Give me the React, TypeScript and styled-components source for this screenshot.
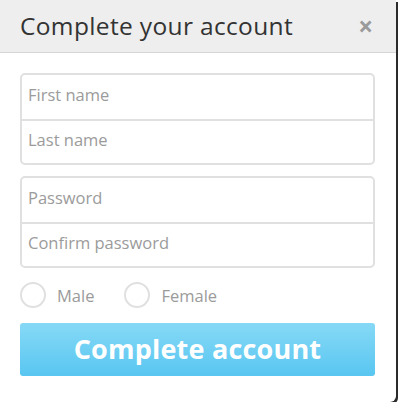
import styled, { createGlobalStyle } from "styled-components";

const GlobalStyle = createGlobalStyle`
  html, body {
    margin: 0;
    padding: 0;
    background: #ffffff;
  }
  * { box-sizing: border-box; }
`;

const Modal = styled.div`
  width: 396px;
  height: 402px;
  background: #ffffff;
  border-bottom-right-radius: 6px;
  box-shadow: 2px 2px 0 #2b2b2b;
  font-family: "Open Sans", "Liberation Sans", sans-serif;
  overflow: hidden;
`;

const Header = styled.div`
  height: 53px;
  background: #eeeeee;
  border-bottom: 1px solid #d6d6d6;
  display: flex;
  align-items: center;
  justify-content: space-between;
  padding: 0 23px 2px 20px;
`;

const Title = styled.h2`
  margin: 0;
  font-size: 24.5px;
  font-weight: 400;
  color: #333333;
  letter-spacing: 0.35px;
`;

const Close = styled.span`
  color: #9a9a9a;
  font-size: 26px;
  font-weight: 700;
  line-height: 1;
  margin-top: 2px;
`;

const Body = styled.form`
  padding: 20px 21px 0 20px;
  display: flex;
  flex-direction: column;
`;

const FieldGroup = styled.div`
  border: 2px solid #e0e0e0;
  border-radius: 5px;
  margin-bottom: 11px;
  display: flex;
  flex-direction: column;
`;

const Input = styled.input`
  height: 44px;
  border: none;
  border-top: ${(p: { $first?: boolean }) => (p.$first ? "none" : "2px solid #e0e0e0")};
  background: transparent;
  padding: 0 6px 5px;
  font-family: inherit;
  font-size: 16.5px;
  outline: none;
  &::placeholder { color: #9b9b9b; }
`;

const Genders = styled.div`
  display: flex;
  align-items: center;
  height: 32px;
`;

const Option = styled.label`
  display: flex;
  align-items: center;
  gap: 11px;
  color: #9b9b9b;
  font-size: 16.5px;
  margin-right: 30px;
`;

const Radio = styled.span`
  width: 26px;
  height: 26px;
  border-radius: 50%;
  border: 2px solid #e0e0e0;
  background: #ffffff;
`;

const Submit = styled.button`
  margin-top: 12px;
  height: 53px;
  border: none;
  border-radius: 3px;
  background: linear-gradient(#86d9f6, #59c6f1);
  color: #ffffff;
  font-family: inherit;
  font-size: 27px;
  font-weight: 700;
  letter-spacing: 0.2px;
  padding-bottom: 3px;
`;

export default function App() {
  return (
    <>
      <GlobalStyle />
      <Modal>
        <Header>
          <Title>Complete your account</Title>
          <Close>×</Close>
        </Header>
        <Body>
          <FieldGroup>
            <Input $first placeholder="First name" />
            <Input placeholder="Last name" />
          </FieldGroup>
          <FieldGroup>
            <Input $first type="password" placeholder="Password" />
            <Input type="password" placeholder="Confirm password" />
          </FieldGroup>
          <Genders>
            <Option><Radio />Male</Option>
            <Option><Radio />Female</Option>
          </Genders>
          <Submit type="button">Complete account</Submit>
        </Body>
      </Modal>
    </>
  );
}
